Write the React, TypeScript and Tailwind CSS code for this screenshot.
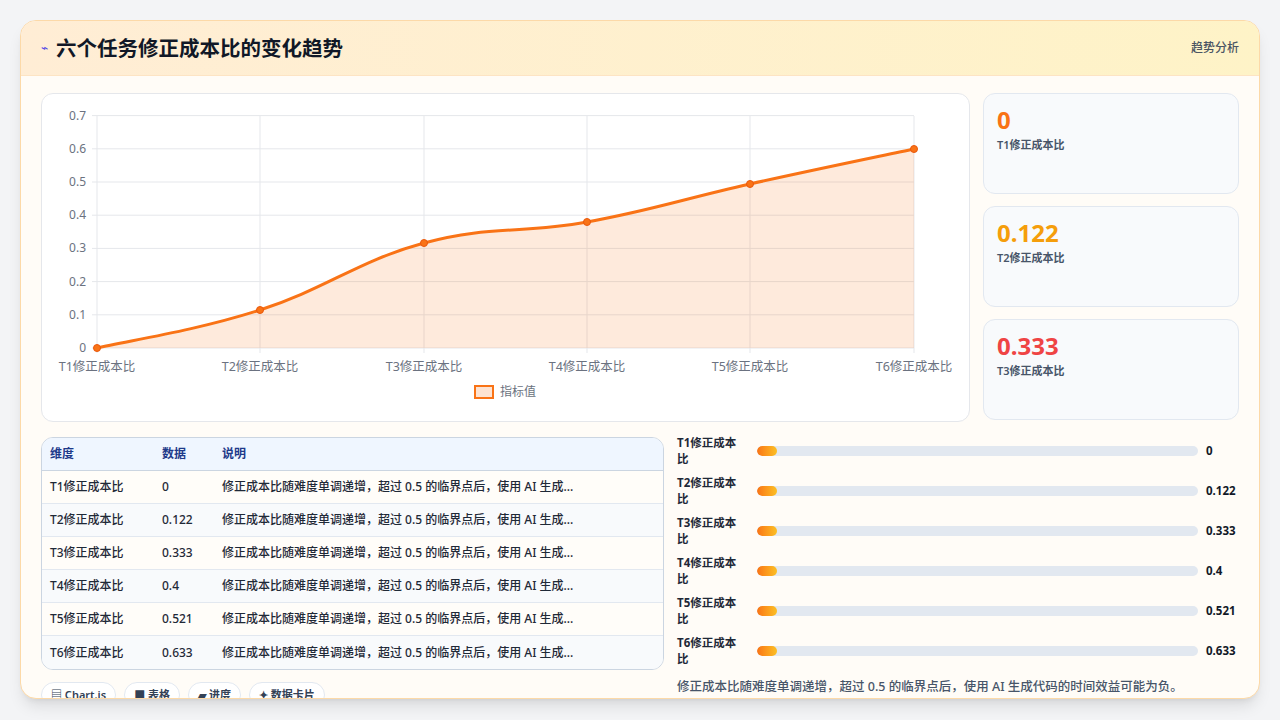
import React from "react"

const font = { fontFamily: '"Noto Sans", "Noto Sans CJK SC", sans-serif' }

const rows = [
  { k: "T1修正成本比", v: "0" },
  { k: "T2修正成本比", v: "0.122" },
  { k: "T3修正成本比", v: "0.333" },
  { k: "T4修正成本比", v: "0.4" },
  { k: "T5修正成本比", v: "0.521" },
  { k: "T6修正成本比", v: "0.633" },
]
const desc = "修正成本比随难度单调递增，超过 0.5 的临界点后，使用 AI 生成..."

// chart points in svg coords (svg placed at panel origin 40,93)
const pts = [
  [55, 254], [218, 216], [382, 149], [545, 128], [708, 90], [872, 55],
]

function smooth(p: number[][]) {
  let d = `M${p[0][0]},${p[0][1]}`
  for (let i = 0; i < p.length - 1; i++) {
    const p0 = p[i - 1] || p[i], p1 = p[i], p2 = p[i + 1], p3 = p[i + 2] || p2
    const t = 0.2
    d += ` C${p1[0] + (p2[0] - p0[0]) * t},${p1[1] + (p2[1] - p0[1]) * t} ${p2[0] - (p3[0] - p1[0]) * t},${p2[1] - (p3[1] - p1[1]) * t} ${p2[0]},${p2[1]}`
  }
  return d
}

function Chart() {
  const line = smooth(pts)
  const yTicks = [0, 0.1, 0.2, 0.3, 0.4, 0.5, 0.6, 0.7]
  const xs = [55, 218, 382, 545, 708, 872]
  return (
    <svg width="928" height="328" className="block">
      {yTicks.map((t, i) => {
        const y = 254 - i * 33.2
        return (
          <g key={i}>
            <line x1="50" x2="872" y1={y} y2={y} stroke="#e5e7eb" />
            <text x="44" y={y + 4} textAnchor="end" fontSize="12" fill="#6b7280" style={font}>{t}</text>
          </g>
        )
      })}
      {xs.map((x, i) => (
        <g key={i}>
          <line x1={x} x2={x} y1="22" y2="259" stroke="#e5e7eb" />
          <text x={x} y="277" textAnchor="middle" fontSize="12.5" fill="#6b7280" style={font}>{rows[i].k}</text>
        </g>
      ))}
      <path d={`${line} L872,254 L55,254 Z`} fill="#f97316" fillOpacity="0.15" />
      <path d={line} fill="none" stroke="#f97316" strokeWidth="3" />
      {pts.map(([x, y], i) => (
        <circle key={i} cx={x} cy={y} r="3.5" fill="#f97316" stroke="#ea580c" />
      ))}
      <rect x="433" y="292" width="18" height="12" fill="#fde3d2" stroke="#f97316" strokeWidth="2" />
      <text x="458" y="302" fontSize="12" fill="#6b7280" style={font}>指标值</text>
    </svg>
  )
}

export default function App() {
  return (
    <div className="w-[1280px] h-[720px] bg-[#f3f4f6] p-5 overflow-hidden" style={font}>
      <div className="h-[679px] rounded-2xl border border-[#fcd9a8] bg-[#fffcf7] shadow-lg overflow-hidden flex flex-col">
        <div className="h-[55px] shrink-0 flex items-center justify-between px-5 bg-gradient-to-r from-[#ffedd5] to-[#fef3c7] border-b border-[#fde4c4]">
          <div className="flex items-center gap-[8px]">
            <span className="text-[12px] text-[#4f46e5]">⌁</span>
            <h1 className="text-[20.5px] font-bold text-[#111827]">六个任务修正成本比的变化趋势</h1>
          </div>
          <span className="text-xs text-[#4b5563] font-medium">趋势分析</span>
        </div>
        <div className="flex-1 px-5 pt-[17px]">
          <div className="flex gap-[13px]">
            <div className="w-[929px] h-[329px] rounded-xl border border-[#e5e7eb] bg-white overflow-hidden">
              <Chart />
            </div>
            <div className="flex-1 flex flex-col gap-[12px]">
              {[
                { v: "0", c: "text-[#f97316]" },
                { v: "0.122", c: "text-[#f59e0b]" },
                { v: "0.333", c: "text-[#ef4444]" },
              ].map((s, i) => (
                <div key={i} className="h-[101px] rounded-xl border border-[#e2e8f0] bg-[#f8fafc] px-[13px] pt-[10px]">
                  <div className={`text-[24px] font-bold leading-[32px] ${s.c}`}>{s.v}</div>
                  <div className="text-[11px] font-semibold text-[#475569] mt-[1px]">{rows[i].k}</div>
                </div>
              ))}
            </div>
          </div>
          <div className="flex gap-[13px] mt-[15px]">
            <div className="w-[623px] shrink-0">
              <div className="rounded-xl border border-[#cbd5e1] overflow-hidden bg-white text-[12px]">
                <div className="flex h-[33px] items-center bg-[#eff6ff] border-b border-[#cbd5e1] text-[#1e3a8a] font-semibold">
                  <div className="w-[120px] pl-[8px]">维度</div>
                  <div className="w-[60px]">数据</div>
                  <div>说明</div>
                </div>
                {rows.map((r, i) => (
                  <div key={i} className={`flex h-[33px] items-center text-[#1f2937] font-medium ${i < 5 ? "border-b border-[#e2e8f0]" : ""} ${i % 2 ? "bg-[#f8fafc]" : "bg-[#fffdf9]"}`}>
                    <div className="w-[120px] pl-[8px]">{r.k}</div>
                    <div className="w-[60px]">{r.v}</div>
                    <div>{desc}</div>
                  </div>
                ))}
              </div>
              <div className="flex gap-2 mt-[12px]">
                {["▤ Chart.js", "■ 表格", "▰ 进度", "✦ 数据卡片"].map((c) => (
                  <span key={c} className="px-[9px] h-[26px] flex items-center rounded-full border border-[#e2e8f0] bg-white text-[11px] font-semibold text-[#334155]">{c}</span>
                ))}
              </div>
            </div>
            <div className="flex-1">
              <div className="flex flex-col gap-[12px]">
                {rows.map((r, i) => (
                  <div key={i} className="flex items-center h-[28px]">
                    <div className="w-[66px] text-[11.5px] font-bold leading-[16px] text-[#1f2937]">{r.k}</div>
                    <div className="ml-[14px] w-[441px] h-[10px] rounded-full bg-[#e2e8f0] overflow-hidden">
                      <div className="w-[20px] h-full rounded-full bg-gradient-to-r from-[#f97316] to-[#fbbf24]" />
                    </div>
                    <div className="ml-[8px] text-[11.5px] font-bold text-[#111827]">{r.v}</div>
                  </div>
                ))}
              </div>
              <p className="mt-[13px] text-[12.5px] font-medium text-[#475569]">修正成本比随难度单调递增，超过 0.5 的临界点后，使用 AI 生成代码的时间效益可能为负。</p>
            </div>
          </div>
        </div>
      </div>
    </div>
  )
}
